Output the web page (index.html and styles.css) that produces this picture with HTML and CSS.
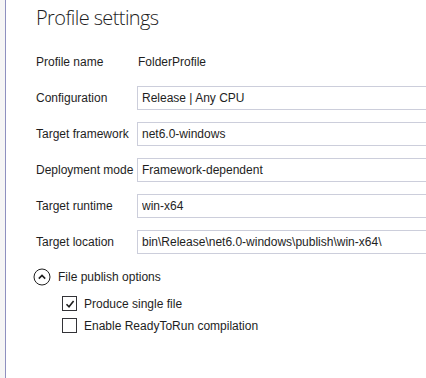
FILE: index.html
```html
<!DOCTYPE html>
<html lang="en">
<head>
    <meta charset="UTF-8">
    <title>Profile settings</title>
    <link rel="stylesheet" href="styles.css">
</head>
<body>
    <div class="frame">
        <div class="side-strip"></div>
        <div class="panel">
            <h1 class="title">Profile settings</h1>

            <div class="settings">
                <div class="row">
                    <span class="label">Profile name</span>
                    <span class="value">FolderProfile</span>
                </div>
                <div class="row">
                    <label class="label" for="configuration">Configuration</label>
                    <input class="field" type="text" id="configuration" value="Release | Any CPU">
                </div>
                <div class="row">
                    <label class="label" for="framework">Target framework</label>
                    <input class="field" type="text" id="framework" value="net6.0-windows">
                </div>
                <div class="row">
                    <label class="label" for="deployment">Deployment mode</label>
                    <input class="field" type="text" id="deployment" value="Framework-dependent">
                </div>
                <div class="row">
                    <label class="label" for="runtime">Target runtime</label>
                    <input class="field" type="text" id="runtime" value="win-x64">
                </div>
                <div class="row">
                    <label class="label" for="location">Target location</label>
                    <input class="field" type="text" id="location" value="bin\Release\net6.0-windows\publish\win-x64\">
                </div>
            </div>

            <div class="expander">
                <div class="expander-head">
                    <svg class="expander-icon" width="18" height="18" viewBox="0 0 18 18">
                        <circle cx="9" cy="9" r="8" fill="none" stroke="#1e1e1e" stroke-width="1"/>
                        <path d="M5.8 10.6 L9 7.4 L12.2 10.6" fill="none" stroke="#1e1e1e" stroke-width="1.6"/>
                    </svg>
                    <span class="expander-title">File publish options</span>
                </div>
                <div class="options">
                    <div class="option">
                        <span class="check checked">
                            <svg width="12" height="12" viewBox="0 0 12 12">
                                <path d="M2.5 6.2 L5 8.7 L9.6 3" fill="none" stroke="#1e1e1e" stroke-width="1.6"/>
                            </svg>
                        </span>
                        <span>Produce single file</span>
                    </div>
                    <div class="option">
                        <span class="check"></span>
                        <span>Enable ReadyToRun compilation</span>
                    </div>
                </div>
            </div>
        </div>
    </div>
</body>
</html>
```

FILE: styles.css
```css
body {
    margin: 0;
    padding: 0;
    background-color: #ffffff;
    font-family: "Liberation Sans", Arial, sans-serif;
    font-size: 12px;
    color: #1e1e1e;
    overflow: hidden;
}
.frame {
    display: flex;
    height: 378px;
}
.side-strip {
    width: 5px;
    background-color: #f5f5f5;
    border-right: 1px solid #8e90bf;
}
.panel {
    flex: 1;
    padding-left: 30px;
    min-width: 0;
}
.title {
    margin: 0;
    padding-top: 4px;
    height: 40px;
    font-family: "Open Sans", sans-serif;
    font-weight: 300;
    font-size: 20px;
    letter-spacing: -0.6px;
    line-height: 28px;
    color: #1e1e1e;
}
.settings {
    display: flex;
    flex-direction: column;
}
.row {
    display: grid;
    grid-template-columns: 101px 1fr;
    align-items: center;
    height: 36px;
}
.value {
    padding-left: 1px;
}
.field {
    height: 24px;
    box-sizing: border-box;
    width: calc(100% + 20px);
    margin: 0;
    padding: 0 4px;
    border: 1px solid #cccedb;
    font-family: inherit;
    font-size: 12px;
    color: #1e1e1e;
    background: #fff;
    outline: none;
}
.expander {
    margin-top: 7px;
}
.expander-head {
    display: flex;
    align-items: center;
    gap: 7px;
    margin-left: -3px;
    height: 20px;
}
.expander-icon {
    display: block;
}
.options {
    display: flex;
    flex-direction: column;
    gap: 7px;
    padding-left: 26px;
    margin-top: 9px;
}
.option {
    display: flex;
    align-items: center;
    gap: 7px;
}
.check {
    width: 13px;
    height: 13px;
    border: 1px solid #333337;
    display: flex;
    align-items: center;
    justify-content: center;
    background: #fff;
}
```
